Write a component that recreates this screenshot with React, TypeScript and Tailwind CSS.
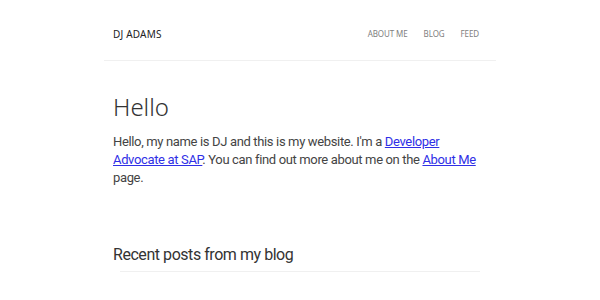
import React from "react";

const navItems = ["About me", "Blog", "Feed"];

export default function App() {
  return (
    <div className="min-h-[300px] w-full bg-white font-['Noto_Sans',sans-serif] text-[#333]">
      <div className="mx-auto w-[392px]">
        <header className="flex h-[61px] items-center justify-between border-b border-[#f0f0f0] pl-[9px] pr-[17px]">
          <a className="pt-[8px] text-[10px] tracking-[0.2px] text-[#222]">DJ ADAMS</a>
          <nav className="flex items-center gap-[16px] pt-[8px]">
            {navItems.map(label => (
              <a key={label} className="text-[8px] uppercase tracking-[-0.1px] text-[#808080]">
                {label}
              </a>
            ))}
          </nav>
        </header>

        <main className="px-[9px] font-['Roboto',sans-serif]">
          <h1 className="mt-[28px] font-['Noto_Sans',sans-serif] text-[24px] font-light leading-[36px] text-[#333]">Hello</h1>
          <p className="mt-[8px] text-[13px] leading-[18px] tracking-[-0.35px] text-[#444]">
            Hello, my name is DJ and this is my website. I'm a{" "}
            <a className="text-[#2f2fe6] underline">Developer Advocate at SAP</a>. You can find out more about me on the{" "}
            <a className="text-[#2f2fe6] underline">About Me</a> page.
          </p>

          <h2 className="mt-[56px] text-[16px] leading-[24px] tracking-[-0.45px] text-[#333]">Recent posts from my blog</h2>
        </main>
        <hr className="mx-[16px] mt-[4px] border-[#f0f0f0]" />
      </div>
    </div>
  );
}
